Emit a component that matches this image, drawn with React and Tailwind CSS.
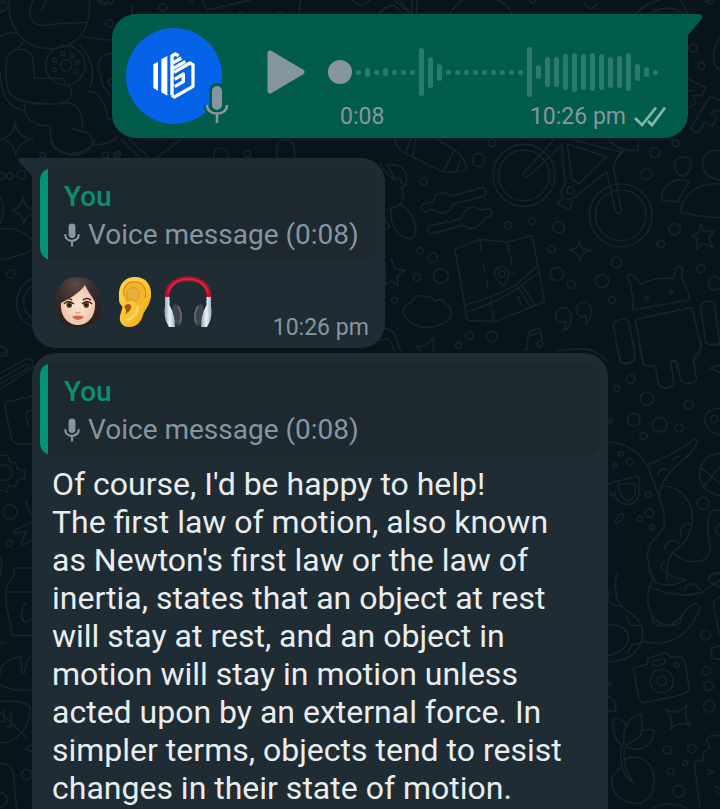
const LEVELS = [
  5, 9, 5, 8, 5, 5, 5, 48, 31, 17, 5, 5, 5, 5, 5, 5, 5, 5, 5, 50, 14, 30, 30, 36,
  39, 36, 38, 36, 31, 32, 38, 17, 10, 5,
];

function Dots({ items }) {
  return items.map(([x, y, r]) => <circle key={`${x}-${y}`} cx={x} cy={y} r={r} />);
}

function Wallpaper() {
  return (
    <svg
      aria-hidden="true"
      viewBox="0 0 720 809"
      preserveAspectRatio="xMidYMid slice"
      className="absolute inset-0 h-full w-full"
      fill="none"
      stroke="#172329"
      strokeWidth="5"
      strokeLinecap="round"
      strokeLinejoin="round"
    >
      {/* teddy bear and sparkle, top left */}
      <g transform="scale(.33333)">
        <path d="M28 0C20 80 70 145 150 146C230 145 275 90 268 0M100 0C80 45 90 80 140 76C180 66 220 72 262 66M122 36L140 0M0 108C20 100 35 98 50 98M240 108C280 115 310 120 340 120M68 125L56 142M20 180C22 140 85 135 98 175L104 235H190L196 250Q216 262 214 280Q208 312 160 312C100 308 40 310 24 270Q14 230 20 180M0 215C5 280 20 325 72 330M72 315C75 350 90 378 150 378M100 312L215 310Q250 325 248 395M150 378C150 430 165 465 225 466C290 460 290 400 250 394L215 386M278 435C310 436 340 425 350 412M240 135C280 180 285 230 270 260M262 276Q290 270 305 300Q320 325 324 358H338M336 160C290 160 290 205 302 225L306 250L328 285M336 235L322 244L334 260" />
        <circle cx="196" cy="196" r="59" />
        <circle cx="198" cy="196" r="17" />
        <Dots items={[[188, 161, 6], [216, 167, 6], [231, 188, 6], [228, 216, 6], [164, 180, 6], [163, 209, 6], [328, 70, 11], [350, 465, 8], [64, 524, 13], [6, 528, 9], [128, 466, 8], [10, 20, 12]]} />
        <path d="M46 365Q50 415 100 417Q54 424 47 468Q42 420 0 418Q42 410 46 365ZM0 0L20 6M0 38L18 30M290 0Q340 20 340 0" />
      </g>

      {/* strip above the outgoing message */}
      <g transform="scale(.45914)" strokeWidth="4">
        <path d="M288 12V40M412 0Q415 10 420 0M442 0L450 22L545 0M655 0Q650 18 654 38M768 0Q785 22 805 0M818 42Q835 12 858 12L892 42M860 0L905 42M870 0L895 30M898 0V40M908 0V40M968 42L1005 0M1085 0Q1115 15 1116 40M1272 6Q1285 28 1300 10M1376 42Q1400 5 1440 0M1402 40Q1430 15 1460 18Q1480 22 1500 36M1480 0Q1498 20 1498 40" />
        <Dots items={[[355, 16, 8], [525, 34, 7], [610, 34, 8], [225, 0, 10], [1160, 0, 6], [1548, 2, 7]]} />
      </g>

      {/* letters and people, right edge */}
      <g transform="translate(660) scale(.33333)">
        <path d="M86 238L136 262L126 288L100 286L108 310L84 324M85 270L100 272M180 300L148 292L96 378Q92 398 118 396L134 366L158 378L170 352L148 340L180 330M180 115Q155 150 162 185Q165 205 180 210M44 490C50 462 90 466 94 490Q90 522 68 530Q42 520 44 490M128 495C125 440 180 450 200 455M128 495Q135 535 180 540M4 600C5 550 45 530 88 544Q72 570 52 606ZM62 638C62 590 110 545 180 552M62 638Q120 650 180 654M122 672L132 695L164 690L146 715L158 742L128 730L108 748L112 718L96 708L116 700Z" />
        <Dots items={[[98, 144, 12], [124, 198, 10], [46, 430, 10], [44, 688, 17], [4, 732, 10], [122, 806, 12], [164, 850, 20], [142, -4, 10]]} />
      </g>

      {/* area between the voice note and the long reply */}
      <g transform="translate(380 130) scale(.33333)">
        <path d="M44 28Q50 55 75 70L185 124Q225 130 262 120Q255 80 222 58L170 28M92 28L78 66M108 28L98 76M222 60L192 122M240 92L230 122M0 100Q20 135 44 150M20 104Q75 100 80 140L78 165Q64 165 60 145L44 150Q38 130 20 104M78 165Q55 175 72 195Q70 215 55 228L25 236M34 236C24 290 60 325 90 326C125 318 105 245 58 222M16 268L30 292L16 298" />
        <path d="M128 222Q118 240 134 246L160 238Q188 262 215 236L220 222L315 198Q325 182 308 172L215 198Q185 178 165 200L160 216ZM148 288Q136 300 152 312L250 286Q280 308 304 280L312 264L334 258Q340 240 328 236L304 240Q272 218 248 252L244 266Z" />
        <circle cx="432" cy="136" r="93" />
        <circle cx="432" cy="136" r="76" />
        <circle cx="722" cy="256" r="94" />
        <circle cx="722" cy="256" r="76" />
        <path d="M430 128Q425 142 442 142L545 45L556 165M524 28L430 128M562 42L680 80L598 160L576 150ZM580 30L722 66L708 90L700 110L724 242Q718 256 706 244L680 125L596 192Q580 210 560 208M556 165Q535 180 550 205L530 220L570 240L576 214M720 78L730 64L690 36M690 32Q710 60 775 62V30" />
        <circle cx="572" cy="182" r="11" />
        <path d="M225 358L300 328L382 336L456 316L494 516L346 574L262 572ZM252 526Q350 500 410 462L470 410M258 546Q350 520 420 470L482 425M410 466L452 530M424 464L466 526M300 330L304 365M310 405L316 430M320 450L324 474M382 340L388 370M392 380L396 402M398 425L404 440M332 512L334 530M336 542L340 570M414 500L424 525M370 468Q340 440 344 430C348 404 388 404 386 434Q380 458 370 468" />
        <circle cx="366" cy="432" r="10" />
        <path d="M598 332Q598 360 632 362Q602 366 602 394Q592 364 568 360Q596 358 598 332ZM35 386L44 415L74 422L52 440L54 466L34 454L16 464L14 400M75 560C60 540 78 520 92 520Q105 488 140 500Q160 500 164 514Q190 500 198 525C220 530 222 575 180 584Q110 608 75 560" />
        <path d="M552 602Q570 596 574 570C580 525 530 525 528 552C526 580 550 582 556 572Q560 590 552 602M616 584Q632 570 634 545C632 505 590 510 588 538C588 560 608 566 616 554Q622 570 616 584M440 662L446 605L480 596L488 640Q478 660 468 642L480 632M446 618L480 608M430 662L440 655M530 662Q560 655 632 658M0 600Q30 590 42 610L62 662M0 630Q28 620 34 640L44 662M106 648Q130 655 160 624V662M110 648L122 662" />
        <path d="M758 540L760 500Q748 480 756 470L742 446Q742 430 758 434L782 462Q830 440 880 446L888 414Q900 402 908 418L904 440L926 490L928 510ZM766 568L936 532L964 654L940 684L946 720M766 568L790 700Q800 712 826 708M700 582Q715 560 745 572L766 680Q755 705 724 698Q710 650 700 582M960 530Q975 505 1002 518L1020 640M960 530L978 640Q995 648 1015 640M874 720V695Q890 690 892 720" />
        <Dots items={[[336, 38, 12], [296, 90, 19], [131, 155, 11], [886, 39, 10], [824, 68, 15], [800, 133, 16], [384, 286, 11], [455, 273, 10], [536, 292, 17], [842, 342, 12], [515, 357, 11], [120, 362, 10], [158, 383, 14], [111, 442, 11], [183, 438, 22], [44, 511, 9], [531, 432, 20], [574, 463, 12], [666, 453, 20], [710, 397, 16], [696, 510, 10], [268, 617, 11], [335, 619, 16], [235, 646, 9], [800, 504, 5], [874, 487, 5]]} />
      </g>

      {/* android legs and octopus */}
      <g transform="translate(580 340) scale(.33333)">
        <path d="M0 26Q50 28 80 62M108 10L120 65Q140 80 164 60L160 0M176 10L190 75L226 80L236 135Q260 155 282 132L272 62H292L302 122Q330 138 350 120L340 60Q350 50 360 45L364 0M378 10Q395 18 420 14M390 84L420 75M390 84L420 98" />
        <path d="M84 306C150 310 185 345 205 385L238 470Q258 530 252 560C240 590 205 600 202 645Q205 690 225 720M204 374Q290 340 345 295Q365 310 310 360Q260 400 246 435Q236 460 238 480M240 440C300 430 345 490 336 550Q325 610 285 630Q255 660 262 720M280 640C330 680 395 670 390 620Q375 560 390 520Q400 505 420 512M254 628C258 595 290 598 298 612M304 588Q295 555 330 550M234 406Q240 380 262 390M278 360Q285 348 300 350M254 665Q240 670 244 690L258 694" />
        <path d="M84 432L170 408Q186 410 176 440Q184 490 140 494Q106 490 104 455M114 432L164 430Q172 470 150 480Q120 485 114 432M104 548Q115 515 130 522Q132 545 104 550M420 205C370 205 360 250 400 278L420 285M420 340C340 345 335 455 420 466M364 384L420 430M420 380L370 440M420 550L405 570L420 590M108 720L112 702M384 720Q400 695 420 698" />
        <Dots items={[[152, 117, 13], [111, 146, 9], [201, 176, 20], [326, 194, 14], [161, 239, 19], [239, 254, 22], [297, 264, 12], [191, 288, 11], [91, 244, 6], [122, 341, 7], [105, 377, 6], [149, 366, 11], [205, 464, 9], [208, 519, 13], [179, 537, 8], [217, 562, 7], [369, 490, 18], [403, 237, 11], [95, 463, 4]]} />
      </g>

      {/* camera, cherry and tentacles */}
      <g transform="translate(580 570) scale(.33333)">
        <path d="M108 20C102 70 110 100 140 122Q190 150 188 190Q185 270 84 276M84 164Q145 165 146 205Q135 250 84 256M90 62Q70 105 118 108M142 138Q145 175 180 165M146 248Q150 215 182 222M206 0L218 32Q260 60 318 30L274 20L260 0M218 30Q200 60 204 100Q215 165 270 166Q310 165 302 140M212 52Q300 90 370 65L420 30M186 214C260 230 320 210 360 115Q350 85 318 120Q290 165 250 168Q215 170 216 138M314 60Q320 38 345 42L362 60M420 50Q380 40 388 20Q390 5 420 12M420 82Q398 85 402 115L418 190" />
        <path d="M160 294L202 282L204 264L258 248L272 262L305 260Q316 270 320 310L328 358Q322 370 280 380L190 398Q176 396 172 360ZM216 280Q216 270 250 266Q262 272 250 282Q220 295 216 280" />
        <circle cx="245" cy="333" r="35" />
        <circle cx="245" cy="333" r="14" />
        <path d="M256 418Q290 440 322 404Q306 445 334 466Q296 452 272 478Q284 446 256 418ZM130 528C98 510 90 450 104 444Q130 445 138 465M132 522C125 470 150 440 182 432Q194 475 176 505Q150 515 136 530M186 482Q205 475 222 482Q220 535 165 538L138 530M122 530Q118 620 162 638M134 532Q126 600 162 638M136 568C190 545 230 590 220 650C215 710 140 715 105 670Q80 620 122 595M394 235Q420 225 420 230M394 235L396 265L420 268M84 380Q108 385 108 424H84M220 714Q270 690 318 714M420 498Q380 490 380 515L390 530L370 548L368 572Q345 565 344 590L360 714M380 600L400 606L385 614M405 650L420 655M410 664L420 675" />
        <Dots items={[[377, 195, 15], [379, 302, 13], [386, 348, 14], [388, 409, 17], [261, 540, 12], [336, 536, 13], [315, 579, 7], [271, 604, 10], [296, 664, 18], [290, 284, 7], [88, 343, 5]]} />
      </g>

      {/* left edge */}
      <g transform="translate(0 340) scale(.33333)">
        <path d="M0 18Q22 20 22 34Q15 42 0 40M0 100L80 56Q108 55 96 86L0 148M0 118L75 74M0 132L86 84Q92 70 75 74M96 168L24 185Q10 190 16 210L36 300Q42 318 96 310M96 210Q75 215 78 230L86 260M0 345L24 348L30 368L46 366L52 386L74 392V414L54 420L46 440L26 436L22 456L0 450" />
        <circle cx="14" cy="398" r="24" />
        <path d="M84 480Q70 485 96 530M96 545L40 572Q38 582 60 578L78 574L64 610Q70 620 96 600M96 684H42V702L18 745V790L38 886H96M18 756H96M78 790C60 815 60 840 78 846Q90 846 96 836M0 650Q10 670 0 705M0 908H18M96 948Q80 950 74 998Q66 1008 64 980V950Q0 960 0 1005M0 1035Q40 1055 96 1050M0 1084Q75 1080 90 1100Q92 1160 50 1190Q30 1212 0 1208M0 1115L80 1195M12 1110V1145H0M34 1120V1160H20M96 1215Q80 1222 76 1228L96 1234M0 1270Q35 1270 40 1300L50 1407M0 1355Q22 1360 22 1385Q15 1400 0 1400" />
        <Dots items={[[30, 516, 21], [28, 610, 9], [80, 1304, 15]]} />
      </g>

      {/* gap under the voice note and the left side of the short reply */}
      <g transform="translate(0 140) scale(.33333)">
        <path d="M152 0C160 48 250 60 286 0M366 0L420 54M390 0L448 54M468 54L540 0M640 54Q640 24 662 24T684 54M830 54V15Q840 -5 860 0Q886 0 884 54M70 168Q72 204 96 206M36 210Q64 206 70 168M36 210Q64 216 72 250Q76 228 96 222M0 170Q22 210 0 250M0 268Q55 255 96 300M0 360Q60 350 96 330M96 415C40 440 30 530 96 560M96 440C64 460 60 510 96 535M0 620Q25 625 20 646L0 650" />
        <Dots items={[[316, 45, 9], [354, 42, 8], [742, 42, 10], [32, 402, 12], [28, 108, 9]]} />
      </g>
    </svg>
  );
}

function MicIcon({ className }) {
  return (
    <svg aria-hidden="true" viewBox="0 0 16 24" className={className} fill="none" stroke="currentColor">
      <rect x="4.600" y=".5" width="6.800" height="14.500" rx="3.400" fill="currentColor" stroke="none" />
      <path d="M1.200 11.200C1.200 20 14.800 20 14.800 11.200M8 18V23.400" strokeWidth="2.200" />
    </svg>
  );
}

function AvatarMic() {
  return (
    <svg aria-hidden="true" viewBox="0 0 32 46" className="absolute -right-[11px] -bottom-1 h-[46px] w-8">
      <path d="M16 8V24M6 23C6 34.500 26 34.500 26 23M16 31V41" fill="none" stroke="#015c4b" strokeWidth="7" />
      <rect x="8" y="1" width="16" height="28" rx="8" fill="#015c4b" />
      <rect x="11" y="4" width="10" height="24" rx="5" fill="#8696a0" />
      <path d="M6 23C6 34.500 26 34.500 26 23M16 31.500V41" fill="none" stroke="#8696a0" strokeWidth="2.600" />
    </svg>
  );
}

function Avatar() {
  return (
    <div className="relative size-24 shrink-0">
      <svg role="img" aria-label="Profile photo" viewBox="78 84 288 288" className="size-24">
        <circle cx="222" cy="228" r="144" fill="#0563e9" />
        <path d="M160 193L174 185V272L160 264ZM184 178L202 168V287L184 277Z" fill="#fff" />
        <path
          d="M216 286V168L226 162L236 167M220 188L244 174M220 205L256 184M216 286L223 291L279 259V194L270 189L222 217M224 238L250 222V245L224 260"
          fill="none"
          stroke="#fff"
          strokeWidth="10"
          strokeLinejoin="round"
        />
      </svg>
      <AvatarMic />
    </div>
  );
}

function VoiceNote() {
  return (
    <article className="relative mr-8 flex w-4/5 self-end rounded-3xl rounded-tr-none bg-[#015c4b] p-3.5 pr-[22px] text-[#8696a0]">
      <svg aria-hidden="true" viewBox="0 0 15 22" className="absolute top-0 left-full h-[22px] w-[15px]">
        <path d="M0 0H11Q16 1 13 6L0 21Z" fill="#015c4b" />
      </svg>
      <Avatar />
      <button type="button" aria-label="Play voice message" className="ml-8 flex h-[88px] w-16 shrink-0 items-center justify-center">
        <svg aria-hidden="true" viewBox="0 0 38 44" className="h-11 w-[38px]">
          <path d="M3 3L35 22L3 41Z" fill="#8696a0" stroke="#8696a0" strokeWidth="5" strokeLinejoin="round" />
        </svg>
      </button>
      <div className="ml-2.5 min-w-0 flex-1 pt-[19px]">
        <div className="relative flex h-[50px] items-center gap-1 pl-7">
          {LEVELS.map((level, i) => (
            <span key={i} className="w-[5px] rounded-full bg-[#2b7b6c]" style={{ height: level }} />
          ))}
          <input
            type="range"
            min="0"
            max="8"
            defaultValue="0"
            aria-label="Playback position"
            className="absolute inset-0 h-full w-full cursor-pointer appearance-none bg-transparent [&::-webkit-slider-thumb]:size-6 [&::-webkit-slider-thumb]:appearance-none [&::-webkit-slider-thumb]:rounded-full [&::-webkit-slider-thumb]:bg-[#8696a0]"
          />
        </div>
        <div className="mt-1.5 -mb-2 flex items-center pl-3 text-[23px] leading-7">
          <span>0:08</span>
          <time className="ml-auto">10:26 pm</time>
          <svg aria-label="Delivered" role="img" viewBox="0 0 32 22" className="ml-2 h-[22px] w-8" fill="none" stroke="#84b5aa" strokeWidth="2.800">
            <path d="M1 12L8 19L22 1.500M14 15L18 19L31 1.500" />
          </svg>
        </div>
      </div>
    </article>
  );
}

function Quote() {
  return (
    <blockquote className="flex overflow-hidden rounded-xl bg-[#1d282f] text-[28px] leading-[38px] text-[#8696a0]">
      <span aria-hidden="true" className="w-2 shrink-0 bg-[#009474]" />
      <div className="pt-2.5 pr-[18px] pb-1.5 pl-4">
        <cite className="block font-medium text-[#079171] not-italic">You</cite>
        <p className="flex items-center gap-2 whitespace-nowrap">
          <MicIcon className="h-6 w-4" />
          Voice message (0:08)
        </p>
      </div>
    </blockquote>
  );
}

function WomanEmoji() {
  return (
    <svg role="img" aria-label="Woman" viewBox="0 0 48 52" className="h-[52px] w-12">
      <defs>
        <radialGradient id="hair" cx=".45" cy=".15" r=".8">
          <stop offset="0" stopColor="#5a4a48" />
          <stop offset=".5" stopColor="#382b2b" />
          <stop offset="1" stopColor="#2b2020" />
        </radialGradient>
        <radialGradient id="skin">
          <stop offset="0" stopColor="#ffe5d2" />
          <stop offset="1" stopColor="#efc4a8" />
        </radialGradient>
      </defs>
      <path d="M24 1C7 1 1 14 1 30C1 44 9 51 24 51S47 44 47 30C47 14 41 1 24 1Z" fill="url(#hair)" />
      <path d="M7 27C14 23 25 18 31 9C34 16 38 20 41 26C42 39 35 49 24 49S6 39 7 27Z" fill="url(#skin)" />
      <path d="M10 24Q14 21 18 24M29 24Q33 21 37 24" fill="none" stroke="#4a3028" strokeWidth="1.600" />
      <ellipse cx="15" cy="29" rx="4.300" ry="3.300" fill="#fff" />
      <ellipse cx="32.500" cy="29" rx="4.300" ry="3.300" fill="#fff" />
      <circle cx="15.200" cy="29" r="3" fill="#6e451d" />
      <circle cx="32.300" cy="29" r="3" fill="#6e451d" />
      <circle cx="15.200" cy="29" r="1.500" fill="#1d120b" />
      <circle cx="32.300" cy="29" r="1.500" fill="#1d120b" />
      <path d="M10 28Q14 23 20 28M28 28Q33 23 38 28" fill="none" stroke="#352019" strokeWidth="1.400" />
      <path d="M21.500 36Q24 38 26.500 36" fill="none" stroke="#dca183" strokeWidth="1.500" />
      <path d="M18 41Q22 38.500 24 40Q26 38.500 30 41Q24 47 18 41Z" fill="#d1674d" />
    </svg>
  );
}

function EarEmoji() {
  return (
    <svg role="img" aria-label="Ear" viewBox="0 0 34 52" className="h-[52px] w-[34px]">
      <defs>
        <linearGradient id="ear" x1="0" x2="1" y1="0" y2="1">
          <stop offset="0" stopColor="#ffd65c" />
          <stop offset=".6" stopColor="#fbbf2d" />
          <stop offset="1" stopColor="#e39a13" />
        </linearGradient>
      </defs>
      <path d="M1 21C0 8 7 1 17 1C28 1 34 9 33 20C32 30 27 33 25 39C23 47 18 51 11 51C4 51 1 46 2 40C3 36 5 32 4 30C1 27 1 25 1 21Z" fill="url(#ear)" />
      <path d="M6 21C4 11 9 5 17 6C26 6 29 14 27 22C26 27 22 30 19 32C20 24 13 24 8 27Z" fill="#f2b42c" />
      <path d="M6 20C4 10 10 5 17 6C26 6 29 14 27 22" fill="none" stroke="#d6921c" strokeWidth="1.300" />
      <path d="M9 20C8 12 15 10 19 13C23 17 20 22 18 25Q14 22 9 24Z" fill="#e8b03c" stroke="#dd951a" strokeWidth="1" />
      <path d="M6 31C9 26 14 28 13 32C12 36 9 36 7 39C9 35 8 33 6 31Z" fill="#9a560d" />
      <path d="M20 31C19 38 15 42 9 44" fill="none" stroke="#ffd45c" strokeWidth="3" strokeLinecap="round" />
    </svg>
  );
}

function HeadphonesEmoji() {
  return (
    <svg role="img" aria-label="Headphones" viewBox="0 0 48 52" className="h-[52px] w-12">
      <defs>
        <linearGradient id="metal">
          <stop offset="0" stopColor="#93a3b3" />
          <stop offset=".5" stopColor="#eaf2f8" />
          <stop offset="1" stopColor="#9fb0bf" />
        </linearGradient>
      </defs>
      <path d="M3 22C3 8 13 3 24 3S45 8 45 22" fill="none" stroke="#b01228" strokeWidth="5" />
      <path d="M4 17C7 7 14 3 24 3S41 7 44 17" fill="none" stroke="#d82a40" strokeWidth="1.600" />
      <ellipse cx="13" cy="39" rx="4.500" ry="11" transform="rotate(-10 13 39)" fill="#3f4448" />
      <ellipse cx="35" cy="39" rx="4.500" ry="11" transform="rotate(10 35 39)" fill="#3f4448" />
      <path d="M14 30Q19 38 16 47M34 30Q29 38 32 47" fill="none" stroke="#6b7074" strokeWidth="1.500" />
      <path d="M1 21H5.500V29Q11 39 11 51L5 51Q-1 42 1 30Z" fill="url(#metal)" />
      <path d="M47 21H42.500V29Q37 39 37 51L43 51Q49 42 47 30Z" fill="url(#metal)" />
    </svg>
  );
}

function EmojiReply() {
  return (
    <article className="relative mt-5 ml-8 self-start rounded-3xl rounded-tl-none bg-[#1f2c34] px-2 pt-2.5 pb-2">
      <svg aria-hidden="true" viewBox="0 0 15 18" className="absolute top-0 right-full h-[18px] w-[15px]">
        <path d="M15 0H3Q-1 1 2 4L15 18Z" fill="#1f2c34" />
      </svg>
      <Quote />
      <div className="flex items-end justify-between pt-4 pr-2 pl-3.5">
        <div className="flex pb-3">
          <WomanEmoji />
          <div className="mr-3 ml-4">
            <EarEmoji />
          </div>
          <HeadphonesEmoji />
        </div>
        <time className="text-[23px] leading-6 text-[#8696a0]">10:26 pm</time>
      </div>
    </article>
  );
}

function TextReply() {
  return (
    <article className="mt-[5px] ml-8 w-4/5 self-start rounded-3xl bg-[#1f2c34] px-2 pt-2.5 pb-8">
      <Quote />
      <p className="px-3 pt-2.5 text-[32px] leading-[38px] text-[#e9edef]">
        Of course, I'd be happy to help!
        <br />
        The first law of motion, also known as Newton's first law or the law of inertia, states that an object at rest
        will stay at rest, and an object in motion will stay in motion unless acted upon by an external force. In simpler
        terms, objects tend to resist changes in their state of motion.
      </p>
    </article>
  );
}

export default function App() {
  return (
    <div className="relative h-screen overflow-hidden bg-[#08131a] font-[Roboto,'Noto_Sans',sans-serif]">
      <Wallpaper />
      <main className="relative flex flex-col pt-3.5">
        <VoiceNote />
        <EmojiReply />
        <TextReply />
      </main>
    </div>
  );
}
